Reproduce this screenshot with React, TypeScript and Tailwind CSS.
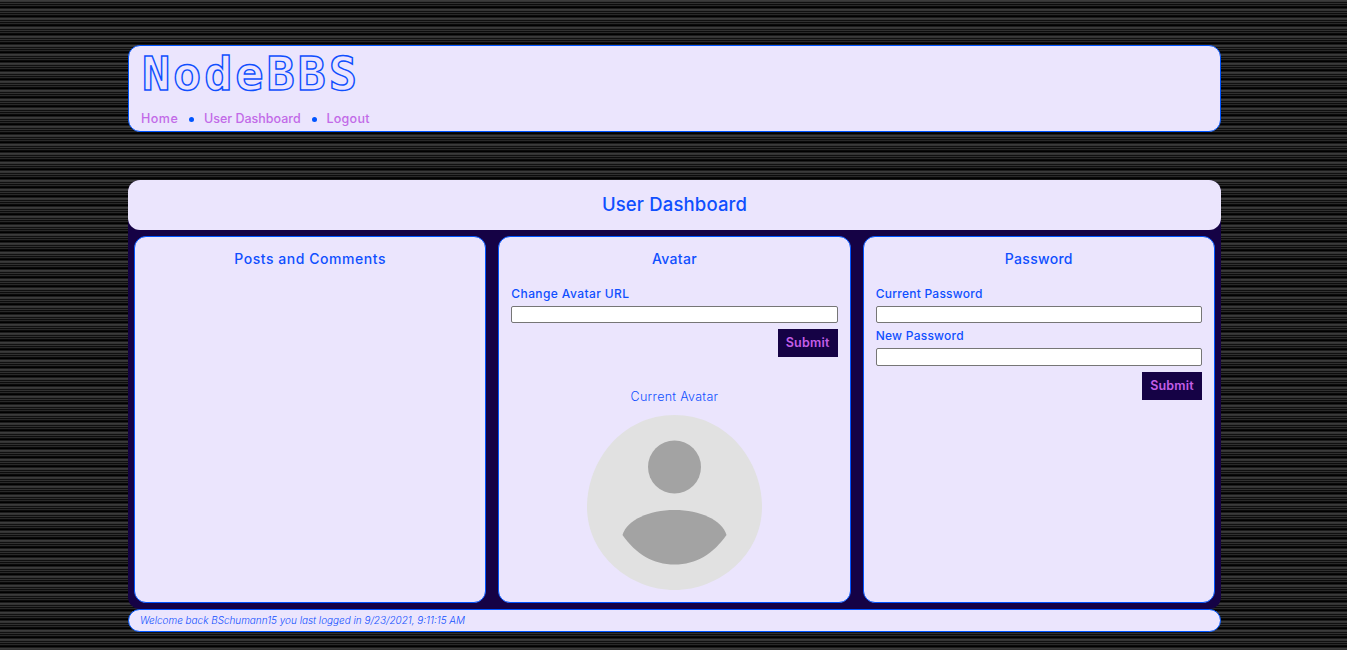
const card = "flex flex-col rounded-[12px] border border-[#0055ff] bg-[#ebe5fd]";
const field = "block w-full shrink-0 rounded-[2px] border border-[#767676] bg-white outline-none";
const label = "text-[12px] leading-[16px] font-medium whitespace-nowrap";
const submit = "h-7 w-[60px] bg-[#150245] pt-px text-[12.5px] font-semibold tracking-[0.2px] text-[#c45ee8]";
const heading = "mt-[11px] h-[22px] text-center text-[14px] leading-[22px] font-medium";
const stripes =
  "bg-[linear-gradient(#3b3b3b_0px,#3b3b3b_1px,#333333_1px,#333333_2px,#101010_2px,#101010_3px,#303030_3px,#303030_4px,#0c0c0c_4px,#0c0c0c_5px,#292929_5px,#292929_6px,#0a0a0a_6px,#0a0a0a_7px,#000000_7px,#000000_8px,#1c1c1c_8px,#1c1c1c_9px)] bg-[length:9px_9px]";

export default function App() {
  return (
    <div className={stripes + " h-[650px] w-[1347px] overflow-hidden pt-[45px] pl-[128px] font-['Inter',sans-serif] text-[#0f4fff]"}>
      <header className={card + " h-[87px] w-[1093px] pl-3"}>
        <h1 className="h-[63px] origin-left scale-x-[1.02] pl-px font-['DejaVu_Sans_Mono',monospace] text-[46px] leading-[56px] font-bold tracking-[2.8px] text-transparent [-webkit-text-stroke:1.4px_#0f4fff]">
          NodeBBS
        </h1>
        <nav className="flex h-5 items-center text-[12.5px] font-medium text-[#c26ae8]">
          <a className="w-[48px] tracking-[0.5px]">Home</a>
          <i className="mr-[10px] size-[5px] rounded-full bg-[#0055ff]" />
          <a className="w-[107.5px]">User Dashboard</a>
          <i className="mr-[10px] size-[5px] rounded-full bg-[#0055ff]" />
          <a className="tracking-[0.25px]">Logout</a>
        </nav>
      </header>
      <main className="mt-12 h-[429px] w-[1093px] rounded-[12px] bg-[#150245]">
        <h2 className="flex h-[50px] items-center justify-center rounded-[12px] bg-[#ebe5fd] text-[18.5px] font-medium tracking-[0.15px]">
          User Dashboard
        </h2>
        <div className="mt-[6px] grid h-[367px] grid-cols-3 gap-3 px-[6px]">
          <section className={card}>
            <h3 className={heading + " tracking-[0.55px]"}>Posts and Comments</h3>
          </section>
          <section className={card + " px-3"}>
            <h3 className={heading + " tracking-[0.3px]"}>Avatar</h3>
            <label className={label + " mt-4 tracking-[0.4px]"}>Change Avatar URL</label>
            <input className={field + " mt-1 h-[17px]"} />
            <button className={submit + " mt-[6px] self-end"}>Submit</button>
            <p className="mt-8 text-center text-[12.5px] leading-4 font-light tracking-[0.3px]">Current Avatar</p>
            <svg className="mt-[10px] self-center" width="175" height="175" viewBox="0 0 175 175">
              <path d="M87.500 0C140 0 175 46 175 92C175 139 133 175 87.500 175C42 175 0 139 0 92C0 46 35 0 87.500 0Z" fill="#e1e1e1" />
              <circle cx="87.500" cy="52" r="26.500" fill="#a3a3a3" />
              <path d="M35.500 120C40 105 62 95 87.500 95S135 105 139.500 120C126 139 109 149.500 87.500 149.500S49 139 35.500 120Z" fill="#a3a3a3" />
            </svg>
          </section>
          <section className={card + " px-3"}>
            <h3 className={heading + " tracking-[0.3px]"}>Password</h3>
            <label className={label + " mt-4 tracking-[0.25px]"}>Current Password</label>
            <input className={field + " mt-1 h-[17px]"} />
            <label className={label + " mt-[5px] tracking-[0.25px]"}>New Password</label>
            <input className={field + " mt-1 h-[18px]"} />
            <button className={submit + " mt-[6px] self-end"}>Submit</button>
          </section>
        </div>
      </main>
      <footer className="flex h-[23px] w-[1093px] items-center rounded-[12px] border border-[#0055ff] bg-[#ebe5fd] pl-[11px] text-[9.95px] font-light italic">
        Welcome back BSchumann15 you last logged in 9/23/2021, 9:11:15 AM
      </footer>
    </div>
  );
}
